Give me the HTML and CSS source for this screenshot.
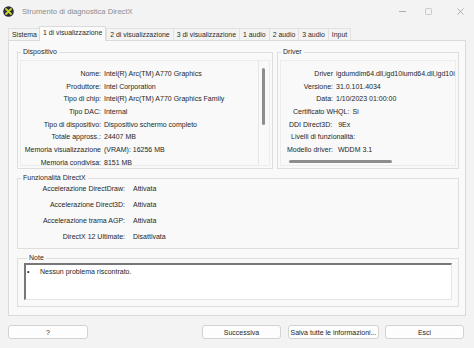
FILE: index.html
```html
<!DOCTYPE html>
<html lang="it">
<head>
    <meta charset="UTF-8">
    <title>Strumento di diagnostica DirectX</title>
    <link rel="stylesheet" href="styles.css">
</head>
<body>

<div class="window">

    <div class="titlebar">
        <svg class="app-icon" width="11" height="11" viewBox="0 0 11 11">
            <circle cx="5.5" cy="5.5" r="5.3" fill="#2c2c3a"/>
            <path d="M3 3 L8 8 M8 3 L3 8" stroke="#c6d62a" stroke-width="1.8" stroke-linecap="round"/>
        </svg>
        <span class="title">Strumento di diagnostica DirectX</span>
        <div class="controls">
            <span class="ctl">
                <svg width="7" height="7" viewBox="0 0 7 7"><path d="M0 3.5 H7" stroke="#9a9a9a" stroke-width="0.8"/></svg>
            </span>
            <span class="ctl">
                <svg width="7" height="7" viewBox="0 0 7 7"><rect x="0.5" y="0.5" width="6" height="6" rx="1" fill="none" stroke="#bdbdbd" stroke-width="0.8"/></svg>
            </span>
            <span class="ctl close">
                <svg width="7" height="7" viewBox="0 0 7 7"><path d="M0.5 0.5 L6.5 6.5 M6.5 0.5 L0.5 6.5" stroke="#9a9a9a" stroke-width="0.8"/></svg>
            </span>
        </div>
    </div>

    <div class="tabs">
        <span class="tab">Sistema</span>
        <span class="tab active">1 di visualizzazione</span>
        <span class="tab">2 di visualizzazione</span>
        <span class="tab">3 di visualizzazione</span>
        <span class="tab">1 audio</span>
        <span class="tab">2 audio</span>
        <span class="tab">3 audio</span>
        <span class="tab">Input</span>
    </div>

    <div class="panel">

        <div class="top-row">
            <fieldset class="group group-dev">
                <legend>Dispositivo</legend>
                <div class="listbox">
                    <div class="rows rows-dev">
                        <span class="lbl">Nome:</span><span class="val">Intel(R) Arc(TM) A770 Graphics</span>
                        <span class="lbl">Produttore:</span><span class="val">Intel Corporation</span>
                        <span class="lbl">Tipo di chip:</span><span class="val">Intel(R) Arc(TM) A770 Graphics Family</span>
                        <span class="lbl">Tipo DAC:</span><span class="val">Internal</span>
                        <span class="lbl">Tipo di dispositivo:</span><span class="val">Dispositivo schermo completo</span>
                        <span class="lbl">Totale appross.:</span><span class="val">24407 MB</span>
                        <span class="lbl">Memoria visualizzazione</span><span class="val">(VRAM): 16256 MB</span>
                        <span class="lbl">Memoria condivisa:</span><span class="val">8151 MB</span>
                    </div>
                    <div class="vscroll"><div class="vthumb"></div></div>
                </div>
            </fieldset>

            <fieldset class="group group-drv">
                <legend>Driver</legend>
                <div class="listbox listbox-col">
                    <div class="rows rows-drv">
                        <span class="lbl">Driver</span><span class="val">igdumdim64.dll,igd10iumd64.dll,igd10i</span>
                        <span class="lbl">Versione:</span><span class="val">31.0.101.4034</span>
                        <span class="lbl">Data:</span><span class="val">1/10/2023 01:00:00</span>
                    </div>
                    <div class="drow drow-whql"><span>Certificato WHQL:</span><span>Sì</span></div>
                    <div class="drow drow-ddi"><span>DDI Direct3D:</span><span>9Ex</span></div>
                    <div class="drow drow-liv"><span>Livelli di funzionalità:</span></div>
                    <div class="drow drow-mod"><span>Modello driver:</span><span>WDDM 3.1</span></div>
                    <div class="hscroll"><div class="hthumb"></div></div>
                </div>
            </fieldset>
        </div>

        <fieldset class="group group-feat">
            <legend>Funzionalità DirectX</legend>
            <div class="rows rows-feat">
                <span class="lbl">Accelerazione DirectDraw:</span><span class="val">Attivata</span>
                <span class="lbl">Accelerazione Direct3D:</span><span class="val">Attivata</span>
                <span class="lbl">Accelerazione trama AGP:</span><span class="val">Attivata</span>
                <span class="lbl">DirectX 12 Ultimate:</span><span class="val">Disattivata</span>
            </div>
        </fieldset>

        <fieldset class="group group-note">
            <legend>Note</legend>
            <div class="notebox">
                <div class="note-item"><span class="bullet">•</span><span>Nessun problema riscontrato.</span></div>
            </div>
        </fieldset>

    </div>

    <div class="buttons">
        <button class="btn btn-help">?</button>
        <span class="spacer"></span>
        <button class="btn btn-next">Successiva</button>
        <button class="btn btn-save">Salva tutte le informazioni...</button>
        <button class="btn btn-exit">Esci</button>
    </div>

</div>

</body>
</html>
```

FILE: styles.css
```css
/* Reset */
* {
    margin: 0;
    padding: 0;
    box-sizing: border-box;
}

body {
    font-family: 'Liberation Sans', Arial, sans-serif;
    font-size: 7px;
    color: #262626;
    background-color: #f3f3f3;
}

.window {
    width: 474px;
    height: 348px;
    background-color: #f3f3f3;
    overflow: hidden;
}

/* Barra del titolo */
.titlebar {
    height: 22px;
    display: flex;
    align-items: center;
    padding-left: 3px;
}

.app-icon {
    flex: none;
}

.title {
    margin-left: 8px;
    font-size: 7.6px;
    color: #8c8c8c;
}

.controls {
    margin-left: auto;
    display: flex;
    height: 22px;
}

.ctl {
    width: 26px;
    display: flex;
    align-items: center;
    justify-content: center;
}

.ctl.close {
    width: 28px;
    margin-left: 5px;
}

/* Schede */
.tabs {
    height: 18px;
    display: flex;
    align-items: flex-end;
    padding-left: 8px;
    position: relative;
    z-index: 1;
}

.tab {
    height: 12px;
    line-height: 12px;
    padding: 0 3px;
    border: 1px solid #e2e2e2;
    border-bottom: none;
    margin-right: -1px;
    white-space: nowrap;
    font-size: 6.9px;
    color: #2a2a2a;
}

.tab.active {
    height: 15px;
    line-height: 12px;
    margin: 0 0 -1px -1px;
    background-color: #fbfbfb;
    border-color: #dadada;
}

/* Pannello */
.panel {
    margin: 0 8px;
    border: 1px solid #dadada;
    background-color: #f9f9f9;
    padding: 7px 6px 8px 8px;
}

.top-row {
    display: flex;
    gap: 4px;
}

.group {
    border: 1px solid #dedede;
    min-width: 0;
}

.group legend {
    margin-left: 3px;
    padding: 0 2px;
    line-height: 8px;
    color: #2a2a2a;
}

.group-dev {
    width: 256px;
    height: 121px;
}

.group-drv {
    width: 182px;
    height: 121px;
}

.listbox {
    margin: 4px 2px 0 2px;
    height: 106px;
    display: flex;
    overflow: hidden;
    border: 1px solid #ececec;
}

.listbox-col {
    flex-direction: column;
}

.rows {
    display: grid;
    grid-auto-rows: 12.7px;
    line-height: 12.7px;
    white-space: nowrap;
}

.rows .lbl {
    text-align: right;
}

.rows-dev {
    flex: 1;
    padding-top: 7px;
    grid-template-columns: 80px 1fr;
    column-gap: 3px;
    overflow: hidden;
}

.vscroll {
    width: 11px;
    flex: none;
    border-left: 1px solid #e6e6e6;
    padding: 7px 0 0 3px;
}

.vthumb {
    width: 3px;
    height: 57px;
    border-radius: 2px;
    background-color: #8d8d8d;
}

.rows-drv {
    padding-top: 7px;
    grid-template-columns: 52px 1fr;
    column-gap: 3px;
    overflow: hidden;
}

.drow {
    height: 12.7px;
    line-height: 12.7px;
    display: flex;
    gap: 3px;
    white-space: nowrap;
}

.drow-whql { padding-left: 12px; }
.drow-ddi { padding-left: 8px; gap: 6px; }
.drow-liv { padding-left: 10px; }
.drow-mod { padding-left: 6px; gap: 5px; }

.hscroll {
    padding: 3px 0 0 8px;
}

.hthumb {
    width: 103px;
    height: 3px;
    border-radius: 2px;
    background-color: #8d8d8d;
}

.group-feat {
    margin-top: 5px;
    padding-bottom: 3px;
}

.rows-feat {
    margin-top: -1px;
    grid-template-columns: 107px 1fr;
    grid-auto-rows: 16px;
    line-height: 16px;
    column-gap: 8px;
}

.group-note {
    margin-top: 5px;
    padding: 1px 6px 6px 6px;
}

.notebox {
    height: 37px;
    background-color: #ffffff;
    border-top: 2px solid #777777;
    border-left: 2px solid #777777;
    border-right: 1px solid #e6e6e6;
    border-bottom: 1px solid #e6e6e6;
    padding: 2px 0 0 1px;
}

.note-item {
    display: flex;
    line-height: 9px;
}

.bullet {
    width: 13px;
}

/* Pulsanti */
.buttons {
    display: flex;
    margin-top: 9px;
    padding: 0 10px 0 8px;
}

.spacer {
    flex: 1;
}

.btn {
    height: 14px;
    font-family: inherit;
    font-size: 7px;
    color: #262626;
    background-color: #fdfdfd;
    border: 1px solid #d3d3d3;
    border-radius: 3px;
}

.btn-help { width: 80px; }
.btn-next { width: 79px; }
.btn-save { width: 91px; margin-left: 7px; }
.btn-exit { width: 79px; margin-left: 6px; }
```
